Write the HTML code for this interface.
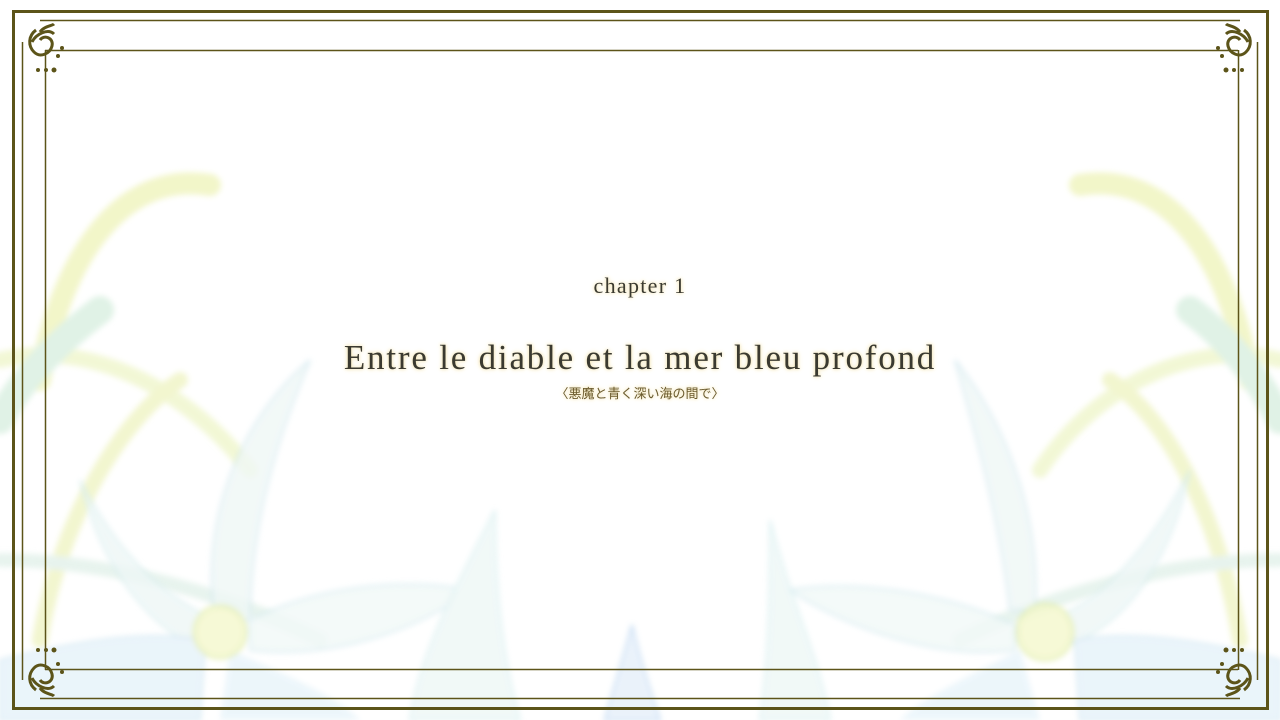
<!DOCTYPE html>
<html><head><meta charset="utf-8"><style>
html,body{margin:0;padding:0;width:1280px;height:720px;overflow:hidden;background:#fff}
.t{position:absolute;left:0;width:1280px;text-align:center;font-family:"Liberation Serif",serif;color:#3b3a30;text-shadow:0 0 3px #f3e4b0,0 0 6px #f7ecc8;white-space:nowrap}
</style></head><body>
<svg width="1280" height="720" style="position:absolute;left:0;top:0" xmlns="http://www.w3.org/2000/svg">
<defs><filter id="b"><feGaussianBlur stdDeviation="3"/></filter></defs>
<g filter="url(#b)" opacity="0.75" fill="none" stroke-linecap="round">
<path d="M210 185 C120 170 60 260 40 380" stroke="#eef3b8" stroke-width="22"/>
<path d="M0 360 C80 340 180 380 250 470" stroke="#eef5c8" stroke-width="16"/>
<path d="M100 310 C60 340 20 380 0 420" stroke="#d6eede" stroke-width="28"/>
<path d="M180 380 C120 420 60 520 40 640" stroke="#eef3c0" stroke-width="16"/>
<path d="M0 560 C120 560 240 600 320 640" stroke="#e0f0e8" stroke-width="14"/>
<path d="M1080 185 C1170 170 1230 260 1250 380" stroke="#eef3b8" stroke-width="22"/>
<path d="M1280 360 C1200 340 1100 380 1040 470" stroke="#eef5c8" stroke-width="16"/>
<path d="M1190 310 C1230 340 1260 380 1280 420" stroke="#d6eede" stroke-width="28"/>
<path d="M1110 380 C1170 420 1220 520 1240 640" stroke="#eef3c0" stroke-width="16"/>
<path d="M1280 560 C1160 560 1040 600 960 640" stroke="#e0f0e8" stroke-width="14"/>
</g>
<g filter="url(#b)" opacity="0.8">
<path d="M310 360 C240 420 200 520 215 620 L250 620 C250 520 280 430 310 360Z" fill="#f0f8f6" stroke="#cfe6ee" stroke-width="2"/>
<path d="M80 480 C120 560 170 600 215 620 L200 650 C140 620 100 560 80 480Z" fill="#eef7f6" stroke="#d5ecee" stroke-width="2"/>
<path d="M250 620 C330 580 420 580 470 590 C420 630 330 660 250 650Z" fill="#f2f9f8" stroke="#d0e8ee" stroke-width="2"/>
<path d="M0 660 C80 640 150 630 205 640 L200 720 L0 720Z" fill="#e6f3fa" stroke="#cde4f0" stroke-width="2"/>
<path d="M230 650 C300 680 340 700 360 720 L220 720Z" fill="#e8f4fa"/>
<path d="M495 510 C460 580 420 650 410 720 L520 720 C500 650 495 580 495 510Z" fill="#eef8f6" stroke="#d6eef0" stroke-width="2"/>
<path d="M632 625 C620 670 610 700 605 720 L660 720 C650 690 640 660 632 625Z" fill="#e6f0fa" stroke="#b8d4f0" stroke-width="2"/>
<path d="M770 520 C790 600 820 660 830 720 L760 720 C770 650 770 580 770 520Z" fill="#eef8f6" stroke="#d6eef0" stroke-width="2"/>
<path d="M955 360 C1010 430 1040 520 1035 610 L1010 610 C1000 520 975 430 955 360Z" fill="#f0f8f6" stroke="#cfe6ee" stroke-width="2"/>
<path d="M1190 470 C1150 550 1100 600 1060 615 L1070 645 C1130 620 1170 560 1190 470Z" fill="#eef7f6" stroke="#d5ecee" stroke-width="2"/>
<path d="M1015 625 C940 590 850 580 790 590 C850 630 940 660 1015 650Z" fill="#f2f9f8" stroke="#d0e8ee" stroke-width="2"/>
<path d="M1280 660 C1200 640 1130 630 1075 640 L1080 720 L1280 720Z" fill="#e6f3fa" stroke="#cde4f0" stroke-width="2"/>
<path d="M1020 650 C960 680 920 700 900 720 L1040 720Z" fill="#e8f4fa"/>
<circle cx="220" cy="632" r="26" fill="#f4f8cc" stroke="#e0eca8" stroke-width="3"/>
<circle cx="1045" cy="632" r="28" fill="#f4f8cc" stroke="#e0eca8" stroke-width="3"/>
</g>
<g fill="none" stroke="#5c5419">
<rect x="13.5" y="11.5" width="1254" height="697" stroke-width="3"/>
<g stroke-width="1.5">
<line x1="40" y1="20.5" x2="1240" y2="20.5"/><line x1="45" y1="50.5" x2="1238" y2="50.5"/>
<line x1="45" y1="669.5" x2="1238" y2="669.5"/><line x1="40" y1="698.5" x2="1240" y2="698.5"/>
<line x1="22.5" y1="42" x2="22.5" y2="680"/><line x1="45.5" y1="50" x2="45.5" y2="670"/>
<line x1="1257.5" y1="42" x2="1257.5" y2="680"/><line x1="1238.5" y1="50" x2="1238.5" y2="670"/>
</g>
</g>
<g fill="#5c5419" stroke="#5c5419">
<g id="c" transform="translate(44,50)">
<path d="M-8 -20 C-16 -14 -16 -4 -10 2 C-4 8 6 4 8 -4 C10 -12 0 -16 -4 -10 M-12 -8 C-8 -16 4 -22 10 -16 M-4 -18 C0 -24 8 -24 10 -26" fill="none" stroke-width="3"/>
<circle cx="-6" cy="20" r="2" stroke="none"/><circle cx="2" cy="20" r="2" stroke="none"/><circle cx="10" cy="20" r="2.5" stroke="none"/><circle cx="14" cy="6" r="2" stroke="none"/><circle cx="18" cy="-2" r="2" stroke="none"/>
</g>
<use href="#c" transform="translate(1280,0) scale(-1,1)"/>
<use href="#c" transform="translate(0,720) scale(1,-1)"/>
<use href="#c" transform="translate(1280,720) scale(-1,-1)"/>
</g>
</svg>
<div class="t" style="top:273px;font-size:22px;letter-spacing:1.3px">chapter 1</div>
<div class="t" style="top:338px;font-size:35px;letter-spacing:1.8px">Entre le diable et la mer bleu profond</div>
<div class="t" style="top:383px;font-size:13px;color:#6b5b2e;font-family:'Liberation Sans','Noto Sans CJK JP',sans-serif">〈悪魔と青く深い海の間で〉</div>
</body></html>
